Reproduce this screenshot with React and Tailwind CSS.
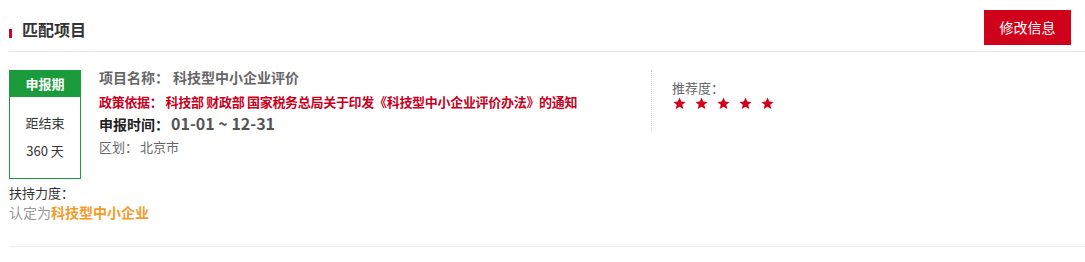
import React from 'react'

const FONT = { fontFamily: '"Noto Sans CJK SC", "Noto Sans", sans-serif' }

function Star() {
  return (
    <svg width="13" height="13" viewBox="0 0 24 24" className="block">
      <path fill="#d0021b" d="M12 1l3.2 7.4 8 .7-6.1 5.3 1.9 7.9L12 18.1l-7 4.2 1.9-7.9L.8 9.1l8-.7z" />
    </svg>
  )
}

export default function App() {
  return (
    <div className="w-[1085px] h-[262px] bg-white pl-[9px] overflow-hidden" style={FONT}>
      <header className="h-[52px] border-b border-[#e5e5e5] flex justify-between items-start">
        <div className="pt-[19px] flex items-center leading-[20px]">
          <span className="w-[3px] h-[9px] mt-[8px] bg-[#d0021b]" />
          <h2 className="ml-[10px] text-[16px] font-bold text-[#333]">匹配项目</h2>
        </div>
        <button className="mt-[10px] mr-[14px] w-[87px] h-[35px] bg-[#d0021b] text-white text-[14px]">
          修改信息
        </button>
      </header>

      <div className="border-b border-[#eeeeee] pb-[26px]">
        <div className="flex items-start mt-[18px]">
          <div className="w-[72px] h-[109px] border border-[#1b9b3b] text-center">
            <div className="h-[26px] bg-[#1b9b3b] text-white text-[13px] font-bold leading-[26px]">申报期</div>
            <div className="pt-[12px] text-[13px] text-[#333] leading-[28px]">
              <div>距结束</div>
              <div>360 天</div>
            </div>
          </div>

          <div className="ml-[18px] w-[552px]">
            <div className="mt-[-1px] text-[14px] leading-[16px] font-bold text-[#666]">
              项目名称：<span className="ml-[4px]">科技型中小企业评价</span>
            </div>
            <div className="mt-[9px] text-[13px] leading-[16px] font-bold text-[#c8001e] tracking-[-0.3px]">
              政策依据：<span className="ml-[3px]">科技部 财政部 国家税务总局关于印发《科技型中小企业评价办法》的通知</span>
            </div>
            <div className="mt-[3px] leading-[20px] font-bold">
              <span className="text-[14px] text-[#222]">申报时间：</span>
              <span className="ml-[2px] text-[16px] text-[#555]">01-01 ~ 12-31</span>
            </div>
            <div className="mt-[5px] text-[13px] leading-[16px] text-[#666]">
              区划：<span className="ml-[2px]">北京市</span>
            </div>
          </div>

          <div className="h-[62px] border-l border-dotted border-[#d5d5d5] pl-[20px]">
            <div className="mt-[10px] text-[13px] leading-[16px] text-[#666]">推荐度：</div>
            <div className="mt-[1px] flex gap-[9px] pl-[1px]">
              <Star />
              <Star />
              <Star />
              <Star />
              <Star />
            </div>
          </div>
        </div>

        <div className="mt-[6px] text-[13px] leading-[16px] text-[#333]">扶持力度：</div>
        <div className="mt-[3px] text-[14px] leading-[16px] text-[#999]">
          认定为<span className="font-bold text-[#f39c2b]">科技型中小企业</span>
        </div>
      </div>
    </div>
  )
}
